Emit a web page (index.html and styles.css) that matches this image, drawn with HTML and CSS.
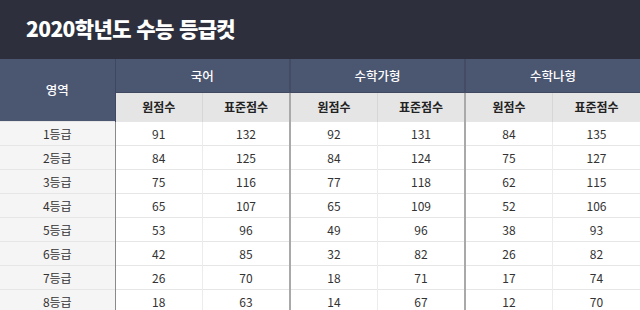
FILE: index.html
```html
<!DOCTYPE html>
<html lang="ko">
<head>
  <meta charset="UTF-8" />
  <meta name="viewport" content="width=device-width, initial-scale=1.0" />
  <title>2020학년도 수능 등급컷</title>
  <link rel="stylesheet" href="styles.css">
</head>
<body>
  <header class="top">
    <h1>2020학년도 수능 등급컷</h1>
  </header>
  <table class="cut">
    <colgroup>
      <col class="c-area">
      <col><col><col><col><col><col>
    </colgroup>
    <thead>
      <tr class="h1">
        <th rowspan="2" class="area">영역</th>
        <th colspan="2" class="grp">국어</th>
        <th colspan="2" class="grp g2">수학가형</th>
        <th colspan="2" class="grp g2">수학나형</th>
      </tr>
      <tr class="h2">
        <th class="first">원점수</th><th>표준점수</th>
        <th class="first g2">원점수</th><th>표준점수</th>
        <th class="first g2">원점수</th><th>표준점수</th>
      </tr>
    </thead>
    <tbody>
      <tr><td class="grade">1등급</td><td class="first">91</td><td>132</td><td class="first g2">92</td><td>131</td><td class="first g2">84</td><td>135</td></tr>
      <tr><td class="grade">2등급</td><td class="first">84</td><td>125</td><td class="first g2">84</td><td>124</td><td class="first g2">75</td><td>127</td></tr>
      <tr><td class="grade">3등급</td><td class="first">75</td><td>116</td><td class="first g2">77</td><td>118</td><td class="first g2">62</td><td>115</td></tr>
      <tr><td class="grade">4등급</td><td class="first">65</td><td>107</td><td class="first g2">65</td><td>109</td><td class="first g2">52</td><td>106</td></tr>
      <tr><td class="grade">5등급</td><td class="first">53</td><td>96</td><td class="first g2">49</td><td>96</td><td class="first g2">38</td><td>93</td></tr>
      <tr><td class="grade">6등급</td><td class="first">42</td><td>85</td><td class="first g2">32</td><td>82</td><td class="first g2">26</td><td>82</td></tr>
      <tr><td class="grade">7등급</td><td class="first">26</td><td>70</td><td class="first g2">18</td><td>71</td><td class="first g2">17</td><td>74</td></tr>
      <tr><td class="grade">8등급</td><td class="first">18</td><td>63</td><td class="first g2">14</td><td>67</td><td class="first g2">12</td><td>70</td></tr>
    </tbody>
  </table>
</body>
</html>
```

FILE: styles.css
```css
* { box-sizing: border-box; }
body { margin: 0; background: #fff; font-family: "Noto Sans CJK KR", "Noto Sans", sans-serif; color: #333; overflow: hidden; }
.top { height: 59px; background: #2d303c; display: flex; align-items: center; padding: 0 0 2px 26px; }
.top h1 { margin: 0; color: #fff; font-size: 21px; font-weight: 900; letter-spacing: -0.6px; line-height: 1; }
.cut { width: 640px; border-collapse: collapse; table-layout: fixed; font-size: 12px; }
.c-area { width: 115px; }
.cut th, .cut td { text-align: center; padding: 0; }
.h1 th { height: 33px; background: #4b5671; color: #fff; font-weight: 500; font-size: 12.5px; border-bottom: 1px solid #3f4860; }
.h1 th.area { border-bottom: none; border-right: 1px solid #3e475f; }
.h1 th.g2 { border-left: 2px solid #434c64; }
.h2 th { height: 29px; background: #e5e5e5; color: #222; font-weight: 700; border-left: 1px solid #d6d6d6; }
.h2 th.first { border-left: 1px solid #8a8a8a; }
.h2 th.g2 { border-left: 2px solid #a9a9a9; }
.cut td { height: 24px; border-top: 1px solid #e6e6e6; border-left: 1px solid #ececec; color: #333; }
.cut td.grade { background: #f5f5f5; border-left: none; }
.cut td.first { border-left: 1px solid #8a8a8a; }
.cut td.g2 { border-left: 2px solid #a9a9a9; }
```
